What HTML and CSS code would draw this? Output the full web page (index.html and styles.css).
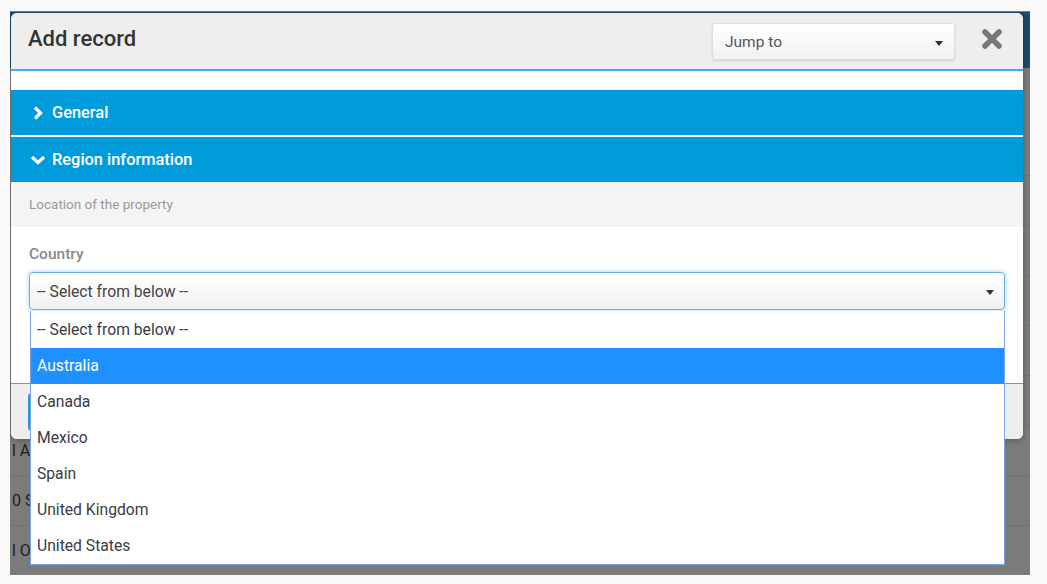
FILE: index.html
```html
<!DOCTYPE html>
<html lang="en">
<head>
<meta charset="UTF-8">
<meta name="viewport" content="width=device-width, initial-scale=1.0">
<title>Add record</title>
<link rel="stylesheet" href="styles.css">
</head>
<body>

<div class="screen">
    <!-- page behind the dialog, dimmed -->
    <div class="page">
        <div class="page-nav"></div>
        <div class="page-rows">
            <div class="page-row"></div>
            <div class="page-row"></div>
            <div class="page-row"></div>
            <div class="page-row"></div>
            <div class="page-row"></div>
            <div class="page-row"></div>
            <div class="page-row"><span class="cell">l Av</span></div>
            <div class="page-row"><span class="cell">0 Sc</span></div>
            <div class="page-row"><span class="cell">l Oc</span></div>
        </div>
    </div>

    <div class="modal">
        <div class="modal-head">
            <h1 class="modal-title">Add record</h1>
            <div class="jump">
                <span>Jump to</span>
                <span class="caret"></span>
            </div>
            <button class="close" type="button">
                <svg width="22" height="22" viewBox="0 0 22 22">
                    <path d="M4 4 L18 18 M18 4 L4 18" stroke="#777" stroke-width="5.5" stroke-linecap="round" fill="none"/>
                </svg>
            </button>
        </div>

        <div class="modal-body">
            <div class="panel-bar">
                <svg class="chev" width="16" height="16" viewBox="0 0 16 16">
                    <path d="M5 2.5 L10.5 8 L5 13.5" stroke="#fff" stroke-width="3.2" fill="none"/>
                </svg>
                General
            </div>
            <div class="panel-bar">
                <svg class="chev" width="16" height="16" viewBox="0 0 16 16">
                    <path d="M2 5 L8 10.5 L14 5" stroke="#fff" stroke-width="3.2" fill="none"/>
                </svg>
                Region information
            </div>
            <div class="panel-desc">Location of the property</div>

            <div class="form">
                <label class="label">Country</label>
                <div class="select-wrap">
                    <div class="select">
                        <span>-- Select from below --</span>
                        <span class="caret"></span>
                    </div>
                    <ul class="options">
                        <li>-- Select from below --</li>
                        <li class="active">Australia</li>
                        <li>Canada</li>
                        <li>Mexico</li>
                        <li>Spain</li>
                        <li>United Kingdom</li>
                        <li>United States</li>
                    </ul>
                </div>
            </div>
        </div>

        <div class="modal-foot">
            <button class="save" type="button">Save</button>
        </div>
    </div>
</div>

</body>
</html>
```

FILE: styles.css
```css
body {
    margin: 0;
    padding: 0;
    background-color: #f9f9f9;
    font-family: Roboto, "Liberation Sans", Arial, sans-serif;
}

/* grey backdrop with the page under it */
.screen {
    position: relative;
    margin: 11px 17px 0 10px;
    height: 564px;
    background-color: #7b7b7b;
    overflow: hidden;
}
.page-nav {
    margin-top: 1px;
    height: 56px;
    background-color: #1c4a69;
}
.page-rows {
    padding-top: 58px;
}
.page-row {
    height: 49px;
    border-bottom: 1px solid #717171;
    line-height: 50px;
    font-size: 16px;
    color: #1e1e1e;
}
.cell {
    padding-left: 2px;
}

/* dialog */
.modal {
    position: absolute;
    left: 1px;
    top: 2px;
    width: 1012px;
    background-color: #fff;
    border-radius: 6px;
    box-shadow: 0 2px 6px rgba(0, 0, 0, 0.25);
}
.modal-head {
    display: flex;
    align-items: center;
    height: 56px;
    padding: 0 20px 0 17px;
    background-color: #eee;
    border-bottom: 2px solid #46ade4;
    border-radius: 6px 6px 0 0;
}
.modal-title {
    margin: 0 0 6px 0;
    font-size: 22px;
    font-weight: 500;
    color: #333;
}
.jump {
    display: flex;
    align-items: center;
    justify-content: space-between;
    box-sizing: border-box;
    width: 243px;
    height: 37px;
    margin-left: auto;
    margin-top: 1px;
    padding: 0 11px 0 12px;
    font-size: 15.5px;
    color: #555;
    background: linear-gradient(#fff, #f1f1f1);
    border: 1px solid #ddd;
    border-radius: 3px;
    box-shadow: 0 1px 2px rgba(0, 0, 0, 0.12);
}
.caret {
    width: 0;
    height: 0;
    margin-top: 3px;
    border-left: 4px solid transparent;
    border-right: 4px solid transparent;
    border-top: 5px solid #333;
}
.close {
    margin-left: 26px;
    margin-bottom: 4px;
    padding: 0;
    border: 0;
    background: none;
    display: flex;
}

.modal-body {
    padding-top: 19px;
}
.panel-bar {
    display: flex;
    align-items: center;
    gap: 6px;
    height: 45px;
    margin-bottom: 2px;
    padding-left: 19px;
    background-color: #019bdc;
    color: #fff;
    font-size: 16.4px;
    font-weight: 500;
}
.panel-desc {
    height: 45px;
    margin-top: -2px;
    padding-left: 18px;
    line-height: 45px;
    background-color: #f4f4f4;
    font-size: 13.5px;
    color: #999;
}
.form {
    padding: 18px 18px 73px 18px;
}
.label {
    display: block;
    margin-bottom: 9px;
    line-height: 18px;
    font-size: 15.5px;
    font-weight: 500;
    color: #888;
}
.select-wrap {
    position: relative;
}
.select {
    display: flex;
    align-items: center;
    justify-content: space-between;
    box-sizing: border-box;
    height: 38px;
    padding: 0 10px 0 7px;
    font-size: 15.7px;
    color: #444;
    background: linear-gradient(#fff, #f0f0f0);
    border: 1px solid #66afe9;
    border-radius: 4px;
    box-shadow: 0 0 5px rgba(102, 175, 233, 0.6);
}
.options {
    position: absolute;
    left: 1px;
    right: 0;
    top: 39px;
    margin: 0;
    padding: 1px 0 0 0;
    list-style: none;
    background-color: #fff;
    border: 1px solid #7ba5e6;
    border-top: 0;
    z-index: 2;
}
.options li {
    height: 36px;
    line-height: 36px;
    padding-left: 6px;
    font-size: 15.7px;
    color: #3b3b45;
}
.options li.active {
    background-color: #1e90ff;
    color: #fff;
}

.modal-foot {
    height: 56px;
    padding: 9px 18px 0 17px;
    box-sizing: border-box;
    background-color: #eee;
    border-top: 1px solid #42a9e2;
    border-radius: 0 0 6px 6px;
}
.save {
    display: block;
    width: 100%;
    height: 38px;
    border: 2px solid #1e9be0;
    border-radius: 4px;
    background-color: #eee;
    font-family: inherit;
    font-size: 15px;
    color: #eee;
}
```
